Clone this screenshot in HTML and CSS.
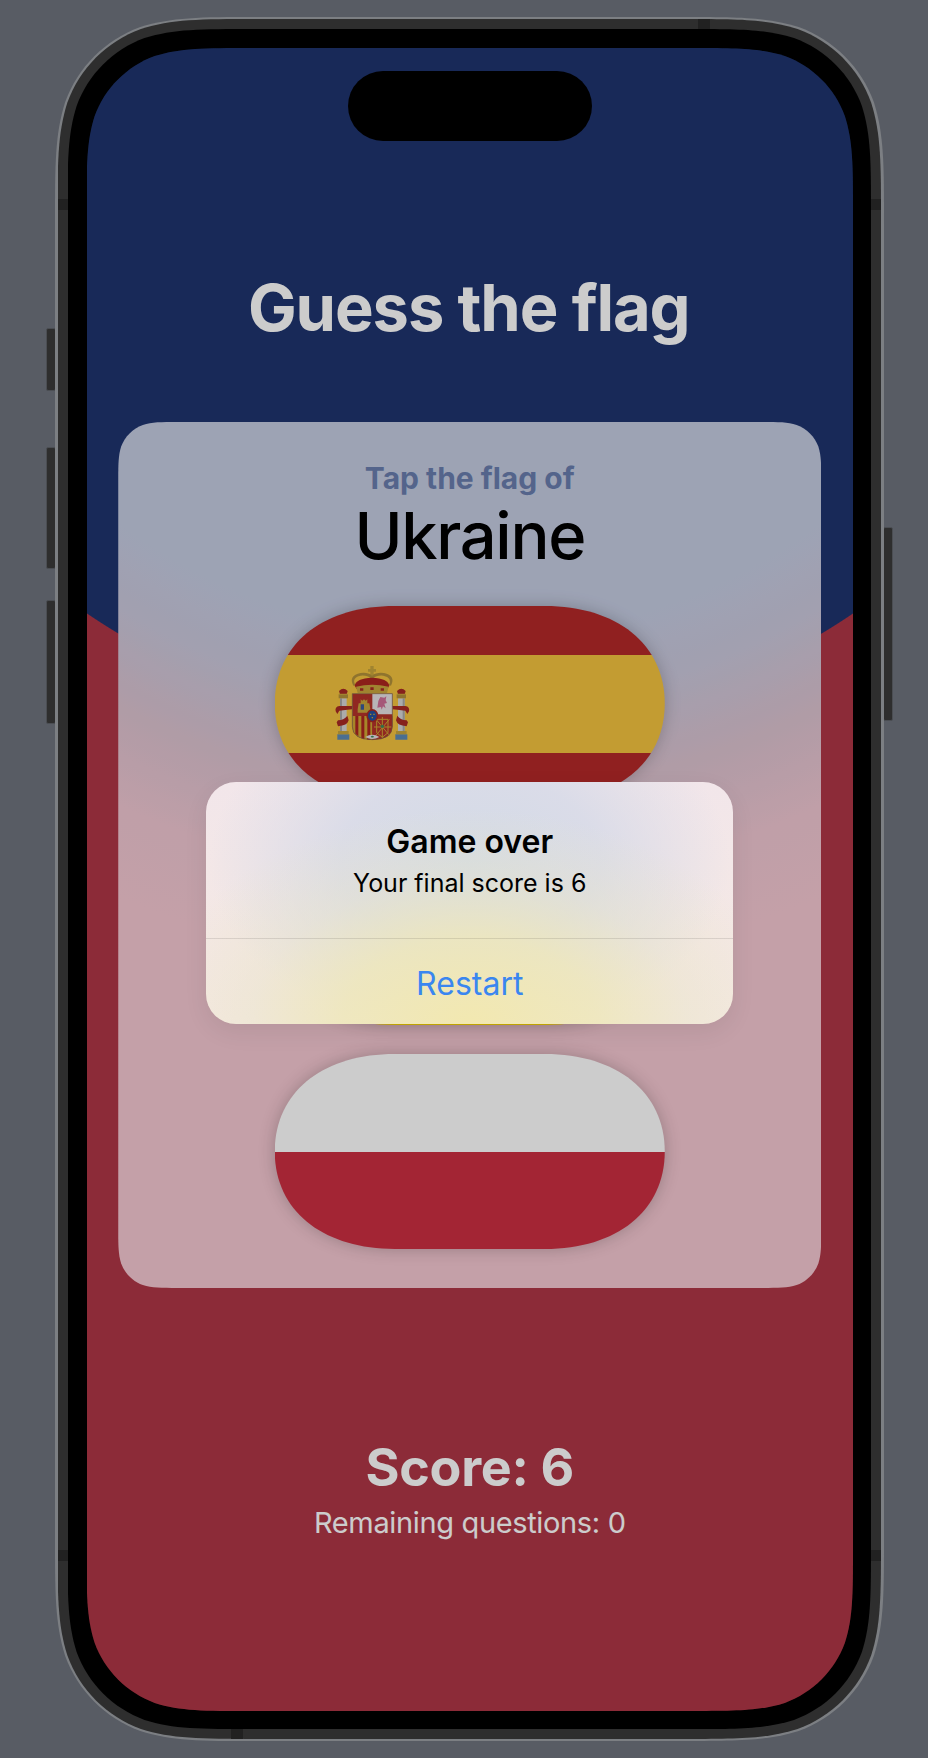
FILE: index.html
```html
<!DOCTYPE html>
<html lang="en">
<head>
<meta charset="utf-8">
<title>Guess the flag</title>
<link rel="stylesheet" href="styles.css">
</head>
<body>
<div class="device">
  <span class="btn btn-mute"></span>
  <span class="btn btn-up"></span>
  <span class="btn btn-down"></span>
  <span class="btn btn-power"></span>
  <div class="shell">
    <div class="band">
      <div class="bezel">
        <div class="screen">
          <main class="app">
            <h1 class="title">Guess the flag</h1>
            <section class="card">
              <div class="prompt">
                <p class="tap">Tap the flag of</p>
                <p class="country">Ukraine</p>
              </div>
              <div class="flag-shadow">
                <div class="flag">
                  <div class="es-red"></div>
                  <div class="es-yellow">
                    <svg class="emblem" viewBox="0 12 330 294" width="110" height="98" aria-hidden="true">
                      <!-- left pillar -->
                      <g>
                        <path d="M52 250h36v16H52z" fill="#5d8ab5"/>
                        <path d="M54 240h32v10H54z" fill="#c9a63c"/>
                        <path d="M60 142h20v98H60z" fill="#d6d6d6"/>
                        <path d="M60 142h6v98h-6z" fill="#a8a8a8"/>
                        <path d="M56 130h28v12H56z" fill="#b3913a"/>
                        <path d="M57 120q13-14 26 0l-3 10H60z" fill="#a82a24"/>
                        <path d="M57 128h26v4H57z" fill="#c9a63c"/>
                      </g>
                      <!-- right pillar -->
                      <g>
                        <path d="M226 250h36v16h-36z" fill="#5d8ab5"/>
                        <path d="M228 240h32v10h-32z" fill="#c9a63c"/>
                        <path d="M234 142h20v98h-20z" fill="#d6d6d6"/>
                        <path d="M248 142h6v98h-6z" fill="#a8a8a8"/>
                        <path d="M230 130h28v12h-28z" fill="#b3913a"/>
                        <path d="M231 120q13-14 26 0l-3 10h-20z" fill="#a82a24"/>
                        <path d="M231 128h26v4h-26z" fill="#c9a63c"/>
                      </g>
                      <!-- ribbons -->
                      <path d="M98 165H58q-14 2-11 16l5 8 6-10 24-3 14-1zM54 208q20-2 28-14l4 14q-4 16-32 18l-4-12z" fill="#a82a24"/>
                      <path d="M216 165h40q14 2 11 16l-5 8-6-10-24-3-14-1zM260 208q-20-2-28-14l-4 14q4 16 32 18l4-12z" fill="#a82a24"/>
                      <!-- crown -->
                      <path d="M151 45h10v9h7v8h-7v12h-10V62h-7v-8h7z" fill="#c9a63c"/>
                      <path d="M100 104q-16-30 22-38 22-3 34 8 13-11 36-8 36 8 21 38l-6-2q11-22-17-28-20-2-30 8l-8 0q-10-10-30-8-28 6-16 28z" fill="#b3913a"/>
                      <path d="M104 104q4-22 52-24 48 2 52 24l-6 10H110z" fill="#ad2620"/>
                      <path d="M108 107q48-12 98 0l-5 19H113z" fill="#c9a63c"/>
                      <path d="M120 112h10v7h-10zM151 109h10v8h-10zM182 112h10v7h-10z" fill="#a82a24"/>
                      <!-- shield -->
                      <path d="M97 128h120v98q0 40-60 40t-60-40z" fill="#b5322a"/>
                      <path d="M157 128h60v62h-60z" fill="#e6e1e4"/>
                      <path d="M172 170l3-20 6-12 12 2 6-4-2 12 4 8-8 2 4 14-8-6-4 10-2-8z" fill="#cf6f96"/>
                      <path d="M97 195h60v71q-60 0-60-40z" fill="#d0a834"/>
                      <path d="M106 195h9v61l-9-8zM124 195h9v69l-9-2zM142 195h9v71h-9z" fill="#ad2620"/>
                      <path d="M157 195h60v31q0 40-60 40z" fill="#b5322a"/>
                      <path d="M168 205l40 48M208 205l-40 48M187 198v64M162 228h52M170 205h34v40l-17 14-17-14z" fill="none" stroke="#d0a834" stroke-width="3"/>
                      <circle cx="187" cy="226" r="5" fill="#3c8a5a"/>
                      <path d="M113 175l3-18h6v-12l5 4 5-4 5 4 5-4v12h6l3 18v10h-38z" fill="#c9a63c"/>
                      <path d="M122 160h10v16h-10z" fill="#3a5a9a"/>
                      <path d="M97 128h120v98q0 40-60 40t-60-40z" fill="none" stroke="#7a6a50" stroke-width="2"/>
                      <!-- escutcheon -->
                      <ellipse cx="157" cy="194" rx="18" ry="20" fill="#a82a24"/>
                      <ellipse cx="157" cy="194" rx="13" ry="15" fill="#23509e"/>
                      <path d="M150 188h4v4h-4zM160 188h4v4h-4zM155 198h4v4h-4z" fill="#d0a834"/>
                      <path d="M136 258q21-14 42 0-21 12-42 0z" fill="#e6e1e4"/>
                      <path d="M152 257q5-5 10 0-5 5-10 0z" fill="#3c8a5a"/>
                    </svg>
                  </div>
                  <div class="es-red"></div>
                </div>
              </div>
              <div class="flag-shadow">
                <div class="flag">
                  <div class="ua-blue"></div>
                  <div class="ua-yellow"></div>
                </div>
              </div>
              <div class="flag-shadow">
                <div class="flag">
                  <div class="pl-white"></div>
                  <div class="pl-red"></div>
                </div>
              </div>
            </section>
            <div class="scoreboard">
              <p class="score">Score: 6</p>
              <p class="remaining">Remaining questions: 0</p>
            </div>
          </main>
          <div class="dim"></div>
          <div class="island"></div>
          <div class="alert-wrap">
            <div class="alert">
              <div class="alert-body">
                <p class="alert-title">Game over</p>
                <p class="alert-msg">Your final score is 6</p>
              </div>
              <div class="alert-action">Restart</div>
            </div>
          </div>
        </div>
      </div>
    </div>
  </div>
  <span class="ant ant-lt"></span>
  <span class="ant ant-rt"></span>
  <span class="ant ant-lb"></span>
  <span class="ant ant-rb"></span>
  <span class="ant ant-top"></span>
  <span class="ant ant-bottom"></span>
</div>
</body>
</html>
```

FILE: styles.css
```css
* { box-sizing: border-box; }
html, body { margin: 0; padding: 0; }
body {
  width: 928px;
  height: 1758px;
  background: #585c64;
  padding: 17px 0 0 55px;
  overflow: hidden;
  font-family: Inter, "Liberation Sans", sans-serif;
}
p, h1 { margin: 0; }

.device {
  position: relative;
  width: 829px;
  height: 1724px;
}
.shell {
  height: 100%;
  padding: 2px 3px 2px 2.5px;
  background: #7c7f83;
  clip-path: path("M206.4,0 L622.6,0 C682.1,0 711.8,0 743.7,10.1 C778.7,22.8 806.2,50.3 818.9,85.3 C829,117.2 829,146.9 829,206.4 L829,1517.6 C829,1577.1 829,1606.8 818.9,1638.7 C806.2,1673.7 778.7,1701.2 743.7,1713.9 C711.8,1724 682.1,1724 622.6,1724 L206.4,1724 C146.9,1724 117.2,1724 85.3,1713.9 C50.3,1701.2 22.8,1673.7 10.1,1638.7 C0,1606.8 0,1577.1 0,1517.6 L0,206.4 C0,146.9 0,117.2 10.1,85.3 C22.8,50.3 50.3,22.8 85.3,10.1 C117.2,0 146.9,0 206.4,0 Z");
}
.band {
  height: 100%;
  padding: 10px;
  background: #2e2e2e;
  clip-path: path("M201.8,0 L621.7,0 C679.8,0 708.9,0 740.1,9.9 C774.3,22.3 801.2,49.2 813.6,83.4 C823.5,114.6 823.5,143.7 823.5,201.8 L823.5,1518.2 C823.5,1576.3 823.5,1605.4 813.6,1636.6 C801.2,1670.8 774.3,1697.7 740.1,1710.1 C708.9,1720 679.8,1720 621.7,1720 L201.8,1720 C143.7,1720 114.6,1720 83.4,1710.1 C49.2,1697.7 22.3,1670.8 9.9,1636.6 C0,1605.4 0,1576.3 0,1518.2 L0,201.8 C0,143.7 0,114.6 9.9,83.4 C22.3,49.2 49.2,22.3 83.4,9.9 C114.6,0 143.7,0 201.8,0 Z");
}
.bezel {
  height: 100%;
  padding: 19px 18px 18px 19px;
  background: #000;
  clip-path: path("M186.5,0 L617,0 C670.7,0 697.6,0 726.5,9.1 C758,20.6 782.9,45.5 794.4,77 C803.5,105.9 803.5,132.8 803.5,186.5 L803.5,1513.5 C803.5,1567.2 803.5,1594.1 794.4,1623 C782.9,1654.5 758,1679.4 726.5,1690.9 C697.6,1700 670.7,1700 617,1700 L186.5,1700 C132.8,1700 105.9,1700 77,1690.9 C45.5,1679.4 20.6,1654.5 9.1,1623 C0,1594.1 0,1567.2 0,1513.5 L0,186.5 C0,132.8 0,105.9 9.1,77 C20.6,45.5 45.5,20.6 77,9.1 C105.9,0 132.8,0 186.5,0 Z");
}
.screen {
  position: relative;
  height: 100%;
  overflow: hidden;
  background: radial-gradient(circle 683px at 50% 0, #1e346f 682.5px, #af3646 683.5px);
  clip-path: path("M165.1,0 L601.4,0 C648.9,0 672.7,0 698.3,8.1 C726.2,18.3 748.2,40.3 758.4,68.2 C766.5,93.8 766.5,117.6 766.5,165.1 L766.5,1497.9 C766.5,1545.4 766.5,1569.2 758.4,1594.8 C748.2,1622.7 726.2,1644.7 698.3,1654.9 C672.7,1663 648.9,1663 601.4,1663 L165.1,1663 C117.6,1663 93.8,1663 68.2,1654.9 C40.3,1644.7 18.3,1622.7 8.1,1594.8 C0,1569.2 0,1545.4 0,1497.9 L0,165.1 C0,117.6 0,93.8 8.1,68.2 C18.3,40.3 40.3,18.3 68.2,8.1 C93.8,0 117.6,0 165.1,0 Z");
}

/* hardware details */
.btn {
  position: absolute;
  width: 10px;
  background: #2e2e2e;
  border: 1px solid #4b4e53;
  border-radius: 2px;
}
.btn-mute { left: -9px; top: 311px; height: 63px; }
.btn-up { left: -9px; top: 430px; height: 122px; }
.btn-down { left: -9px; top: 583px; height: 124px; }
.btn-power { right: -9px; top: 510px; height: 194px; }
.ant { position: absolute; background: #212121; }
.ant-lt, .ant-rt { top: 182px; width: 10px; height: 11px; }
.ant-lb, .ant-rb { top: 1533px; width: 10px; height: 11px; }
.ant-lt, .ant-lb { left: 2.5px; }
.ant-rt, .ant-rb { right: 3px; }
.ant-top { top: 2px; left: 643px; width: 12px; height: 10px; }
.ant-bottom { bottom: 2px; left: 176px; width: 12px; height: 10px; }

/* app */
.app {
  display: flex;
  flex-direction: column;
  align-items: center;
  height: 100%;
  padding: 220px 32px 0;
}
.title {
  height: 80px;
  padding-right: 2px;
  font-size: 65px;
  line-height: 80px;
  font-weight: 700;
  letter-spacing: -1.1px;
  color: #fff;
  white-space: nowrap;
}
.card {
  flex: none;
  width: 703px;
  height: 866px;
  margin-top: 74px;
  padding-top: 38px;
  display: flex;
  flex-direction: column;
  align-items: center;
  gap: 29px;
  background: radial-gradient(circle at 351.5px -374px, #c5cce2 590px, #cbc8dc 660px, #dcc3d0 745px, #f0c7d2 835px, #f5c8d2 920px);
  clip-path: path("M59.6,0 L643.4,0 C660.5,0 669.1,0 678.4,2.9 C688.5,6.6 696.4,14.5 700.1,24.6 C703,33.9 703,42.5 703,59.6 L703,806.4 C703,823.5 703,832.1 700.1,841.4 C696.4,851.5 688.5,859.4 678.4,863.1 C669.1,866 660.5,866 643.4,866 L59.6,866 C42.5,866 33.9,866 24.6,863.1 C14.5,859.4 6.6,851.5 2.9,841.4 C0,832.1 0,823.5 0,806.4 L0,59.6 C0,42.5 0,33.9 2.9,24.6 C6.6,14.5 14.5,6.6 24.6,2.9 C33.9,0 42.5,0 59.6,0 Z");
}
.prompt {
  display: flex;
  flex-direction: column;
  align-items: center;
  margin-bottom: 1px;
}
.tap {
  font-size: 30px;
  line-height: 36px;
  font-weight: 700;
  color: #6a7eae;
}
.country {
  font-size: 65px;
  line-height: 80px;
  font-weight: 550;
  letter-spacing: -1.35px;
  color: #000;
}

/* flags */
.flag-shadow {
  flex: none;
  filter: drop-shadow(0 0 8px rgba(0, 0, 0, 0.22));
}
.flag {
  display: flex;
  flex-direction: column;
  width: 390px;
  height: 195px;
  clip-path: path("M120,0 H270 C342,0 390,38 390,97.5 C390,157 342,195 270,195 H120 C48,195 0,157 0,97.5 C0,38 48,0 120,0 Z");
}
.es-red { flex: 1; background: #b42828; }
.es-yellow {
  flex: none;
  height: 98px;
  display: flex;
  align-items: center;
  padding-left: 45px;
  background: #f4c33f;
}
.emblem { display: block; }
.ua-blue { flex: 1; background: #0057b7; }
.ua-yellow { flex: 1; background: #ffd700; }
.pl-white { flex: 1; background: #fff; }
.pl-red { flex: 1; background: #cc2f42; }

/* score */
.scoreboard {
  display: flex;
  flex-direction: column;
  align-items: center;
  margin-top: 148px;
}
.score {
  font-size: 52px;
  line-height: 64px;
  font-weight: 700;
  letter-spacing: -0.3px;
  color: #fff;
}
.remaining {
  margin-top: 5px;
  font-size: 29px;
  line-height: 36px;
  letter-spacing: -0.35px;
  color: #fff;
}

/* overlays */
.dim {
  position: absolute;
  inset: 0;
  background: rgba(0, 0, 0, 0.2);
}
.island {
  position: absolute;
  top: 23px;
  left: 261px;
  width: 244px;
  height: 70px;
  border-radius: 35px;
  background: #000;
}
.alert-wrap {
  position: absolute;
  inset: 0;
  display: flex;
  justify-content: center;
  padding-top: 734px;
}
.alert {
  width: 527px;
  height: 242px;
  display: flex;
  flex-direction: column;
  overflow: hidden;
  border-radius: 30px;
  background:
    radial-gradient(ellipse 320px 215px at 50% 100%, rgba(242, 232, 176, 1) 0, rgba(238, 231, 186, 0.85) 40%, rgba(232, 228, 200, 0.45) 68%, rgba(230, 228, 210, 0) 100%),
    radial-gradient(ellipse 260px 180px at 50% 33%, rgba(210, 218, 230, 1) 0, rgba(214, 218, 232, 0.85) 50%, rgba(225, 225, 235, 0) 100%),
    linear-gradient(#f2e6ea, #f5e9e2);
  box-shadow: 0 8px 24px rgba(0, 0, 0, 0.07);
}
.alert-body {
  flex: none;
  height: 157px;
  padding-top: 39px;
  display: flex;
  flex-direction: column;
  align-items: center;
  border-bottom: 1px solid rgba(0, 0, 0, 0.1);
}
.alert-title {
  font-size: 32px;
  line-height: 42px;
  font-weight: 600;
  color: #000;
}
.alert-msg {
  margin-top: 2px;
  font-size: 25px;
  line-height: 36px;
  color: #000;
}
.alert-action {
  flex: 1;
  display: flex;
  align-items: center;
  justify-content: center;
  padding-top: 4px;
  font-size: 32px;
  color: #3a86f0;
}
```
